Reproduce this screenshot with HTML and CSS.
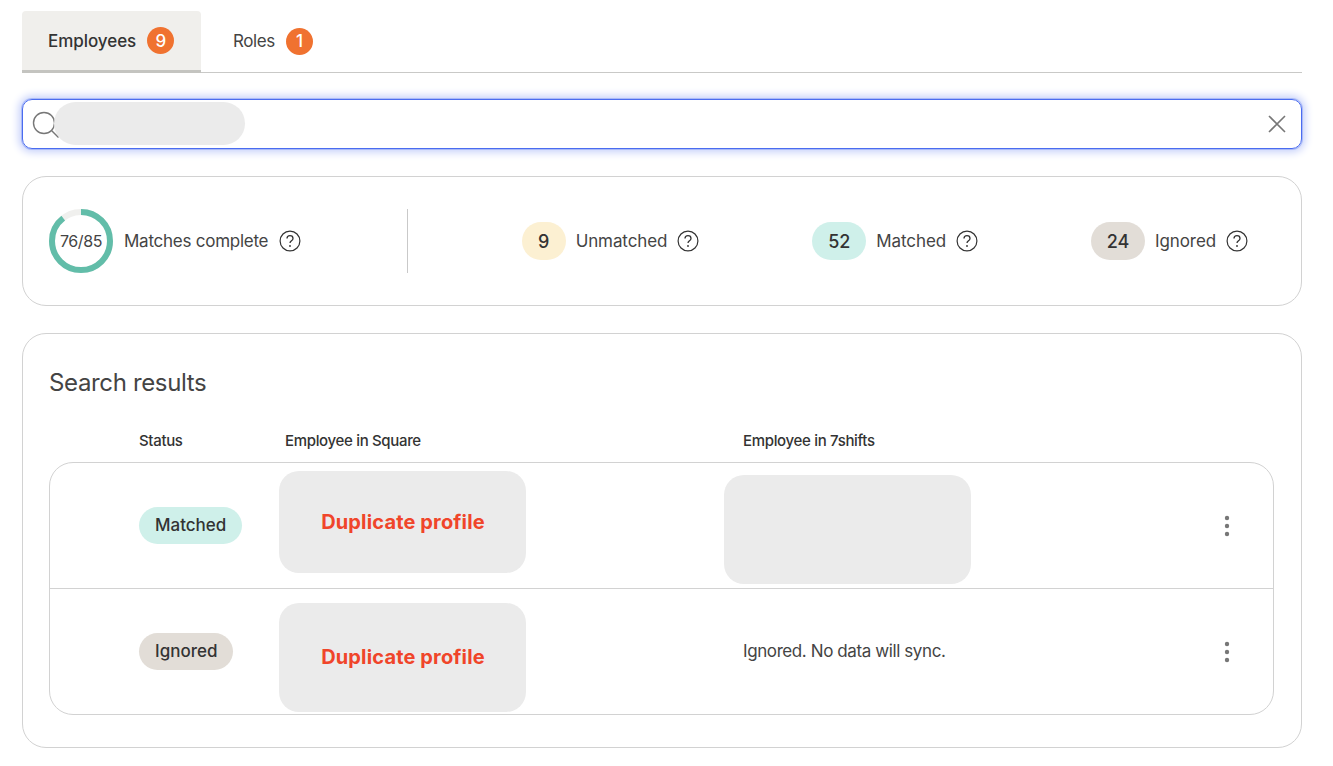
FILE: index.html
```html
<!DOCTYPE html>
<html lang="en">
<head>
<meta charset="UTF-8">
<meta name="viewport" content="width=device-width, initial-scale=1.0">
<title>Match employees</title>
<link rel="stylesheet" href="styles.css">
</head>
<body>
<div class="tabs">
  <div class="tab active">Employees <span class="tab-count">9</span></div>
  <div class="tab">Roles <span class="tab-count">1</span></div>
</div>

<div class="search">
  <svg class="search-icon" width="28" height="28" viewBox="0 0 28 28" fill="none" stroke="#777" stroke-width="1.4">
    <circle cx="12" cy="12" r="10.5"/>
    <path d="M19.5 19.5l7 7"/>
  </svg>
  <div class="search-value"></div>
  <svg class="search-clear" width="18" height="18" viewBox="0 0 18 18" fill="none" stroke="#777" stroke-width="1.6">
    <path d="M1 1l16 16M17 1L1 17"/>
  </svg>
</div>

<div class="card summary">
  <div class="progress">
    <div class="ring">
      <svg width="64" height="64" viewBox="0 0 64 64" fill="none" stroke-width="6">
        <circle cx="32" cy="32" r="29" stroke="#f0f0ee"/>
        <circle cx="32" cy="32" r="29" stroke="#62bda9" stroke-dasharray="162.8 182.2" transform="rotate(-90 32 32)"/>
      </svg>
      <span class="ring-text">76/85</span>
    </div>
    <span class="stat-label">Matches complete</span>
    <svg class="help" width="22" height="22" viewBox="0 0 22 22"><use href="#help"/></svg>
  </div>
  <div class="stats">
    <div class="stat">
      <span class="stat-count unmatched">9</span>
      <span class="stat-label">Unmatched</span>
      <svg class="help" width="22" height="22" viewBox="0 0 22 22"><use href="#help"/></svg>
    </div>
    <div class="stat">
      <span class="stat-count matched">52</span>
      <span class="stat-label">Matched</span>
      <svg class="help" width="22" height="22" viewBox="0 0 22 22"><use href="#help"/></svg>
    </div>
    <div class="stat">
      <span class="stat-count ignored">24</span>
      <span class="stat-label">Ignored</span>
      <svg class="help" width="22" height="22" viewBox="0 0 22 22"><use href="#help"/></svg>
    </div>
  </div>
</div>

<div class="card results">
  <h2>Search results</h2>
  <div class="table-head">
    <div class="head-status">Status</div>
    <div class="head-square">Employee in Square</div>
    <div class="head-shifts">Employee in 7shifts</div>
  </div>
  <div class="table">
    <div class="row">
      <div><span class="badge matched">Matched</span></div>
      <div class="blank first">Duplicate profile</div>
      <div class="blank second"></div>
      <svg class="more" width="6" height="22" viewBox="0 0 6 22" fill="#777"><circle cx="3" cy="3" r="2.2"/><circle cx="3" cy="11" r="2.2"/><circle cx="3" cy="19" r="2.2"/></svg>
    </div>
    <div class="row">
      <div><span class="badge ignored">Ignored</span></div>
      <div class="blank third">Duplicate profile</div>
      <div class="note">Ignored. No data will sync.</div>
      <svg class="more" width="6" height="22" viewBox="0 0 6 22" fill="#777"><circle cx="3" cy="3" r="2.2"/><circle cx="3" cy="11" r="2.2"/><circle cx="3" cy="19" r="2.2"/></svg>
    </div>
  </div>
</div>

<svg width="0" height="0" class="defs">
  <symbol id="help" viewBox="0 0 22 22">
    <circle cx="11" cy="11" r="9.9" fill="none" stroke="#333" stroke-width="1.2"/>
    <path d="M8 8.6c0-1.8 1.4-2.9 3-2.9s3 1.1 3 2.7c0 2.3-3 2.4-3 4.6" fill="none" stroke="#333" stroke-width="1.3"/>
    <circle cx="11" cy="16" r="0.9" fill="#333"/>
  </symbol>
</svg>
</body>
</html>
```
FILE: styles.css
```css
body {
  font-family: Inter, "Liberation Sans", sans-serif;
  color: #444;
  background-color: #fff;
  margin: 0;
  padding: 11px 31px 18px 22px;
}

.defs {
  position: absolute;
}

.tabs {
  display: flex;
  height: 62px;
  border-bottom: 1px solid #c9c9c7;
  box-sizing: border-box;
}

.tab {
  display: flex;
  align-items: center;
  gap: 11px;
  padding: 0 32px 1px;
  font-size: 17px;
  letter-spacing: -0.4px;
  box-sizing: border-box;
}

.tab.active {
  width: 179px;
  padding: 0 26px;
  height: 62px;
  color: #333;
  font-weight: 500;
  letter-spacing: -0.05px;
  background-color: #f0efec;
  border-bottom: 3px solid #c4c4c0;
  border-radius: 4px 4px 0 0;
}

.tab-count {
  display: flex;
  align-items: center;
  justify-content: center;
  width: 27px;
  height: 27px;
  border-radius: 50%;
  font-size: 17px;
  font-weight: 500;
  color: #fff;
  background-color: #f07230;
}

.search {
  display: flex;
  align-items: center;
  height: 50px;
  margin-top: 26px;
  padding: 0 15px 0 9px;
  box-sizing: border-box;
  border: 1px solid #4a6cf0;
  border-radius: 10px;
  box-shadow: 0 0 0 1px rgba(74, 108, 240, 0.3), 0 0 9px 3px #c3cefa;
}

.search-icon {
  flex: none;
  margin-top: 1px;
}

.search-value {
  width: 191px;
  height: 43px;
  margin-left: -6px;
  margin-bottom: 2px;
  border-radius: 22px;
  background-color: #ebebeb;
}

.search-clear {
  margin-left: auto;
}

.card {
  border: 1px solid #d2d2d2;
  border-radius: 24px;
}

.summary {
  display: flex;
  height: 130px;
  margin-top: 27px;
  padding: 32px 26px;
  box-sizing: border-box;
}

.progress {
  display: flex;
  align-items: center;
  width: 359px;
  flex: none;
  border-right: 1px solid #c9c9c9;
  box-sizing: border-box;
}

.ring {
  position: relative;
  width: 64px;
  height: 64px;
  margin-right: 11px;
}

.ring-text {
  position: absolute;
  inset: 0;
  display: flex;
  align-items: center;
  justify-content: center;
  font-size: 16px;
  letter-spacing: -0.4px;
}

.stat-label {
  font-size: 17px;
  letter-spacing: -0.25px;
}

.stats .stat-label {
  letter-spacing: -0.1px;
}

.help {
  margin-left: 11px;
}

.stats .help {
  margin-left: 10px;
}

.stats {
  flex: 1;
  display: flex;
  justify-content: flex-end;
  align-items: center;
  gap: 113px;
  padding-right: 27px;
}

.stat {
  display: flex;
  align-items: center;
}

.stat-count {
  display: flex;
  align-items: center;
  justify-content: center;
  min-width: 44px;
  height: 38px;
  padding: 0 5px;
  margin-right: 10px;
  box-sizing: border-box;
  border-radius: 19px;
  font-size: 18px;
  font-weight: 500;
  color: #333;
}

.stat-count.unmatched {
  background-color: #fcf0d2;
}

.stat-count:not(.unmatched) {
  min-width: 54px;
}

.matched {
  background-color: #cff0ea;
}

.ignored {
  background-color: #e2ddd7;
}

.results {
  margin-top: 27px;
  height: 415px;
  padding: 0 27px 0 26px;
  box-sizing: border-box;
}

h2 {
  margin: 33px 0 0;
  font-size: 24px;
  font-weight: 400;
  line-height: 32px;
  letter-spacing: -0.35px;
}

.table-head {
  display: flex;
  margin-top: 31px;
  padding-left: 90px;
  font-size: 15px;
  font-weight: 500;
  line-height: 22px;
  letter-spacing: -0.33px;
  color: #333;
}

.head-status {
  width: 146px;
}

.head-square {
  width: 458px;
}

.table {
  margin-top: 10px;
  border: 1px solid #d2d2d2;
  border-radius: 24px;
}

.row {
  display: grid;
  grid-template-columns: 140px 445px 1fr 6px;
  align-items: center;
  height: 125px;
  padding: 0 43px 0 89px;
}

.row + .row {
  border-top: 1px solid #d2d2d2;
}

.badge {
  display: inline-block;
  padding: 0 16px;
  line-height: 37px;
  border-radius: 19px;
  font-size: 17px;
  font-weight: 500;
  color: #333;
}

.blank {
  display: flex;
  align-items: center;
  justify-content: center;
  align-self: start;
  width: 247px;
  padding-left: 1px;
  box-sizing: border-box;
  border-radius: 20px;
  background-color: #ebebeb;
  font-size: 20px;
  font-weight: 700;
  letter-spacing: 0.15px;
  color: #f0452a;
}

.blank.first {
  height: 102px;
  margin-top: 8px;
}

.blank.second {
  height: 109px;
  margin-top: 12px;
}

.blank.third {
  height: 109px;
  margin-top: 14px;
  padding-bottom: 2px;
}

.note {
  padding-left: 19px;
  padding-bottom: 2px;
  font-size: 17px;
  letter-spacing: -0.4px;
}
```
